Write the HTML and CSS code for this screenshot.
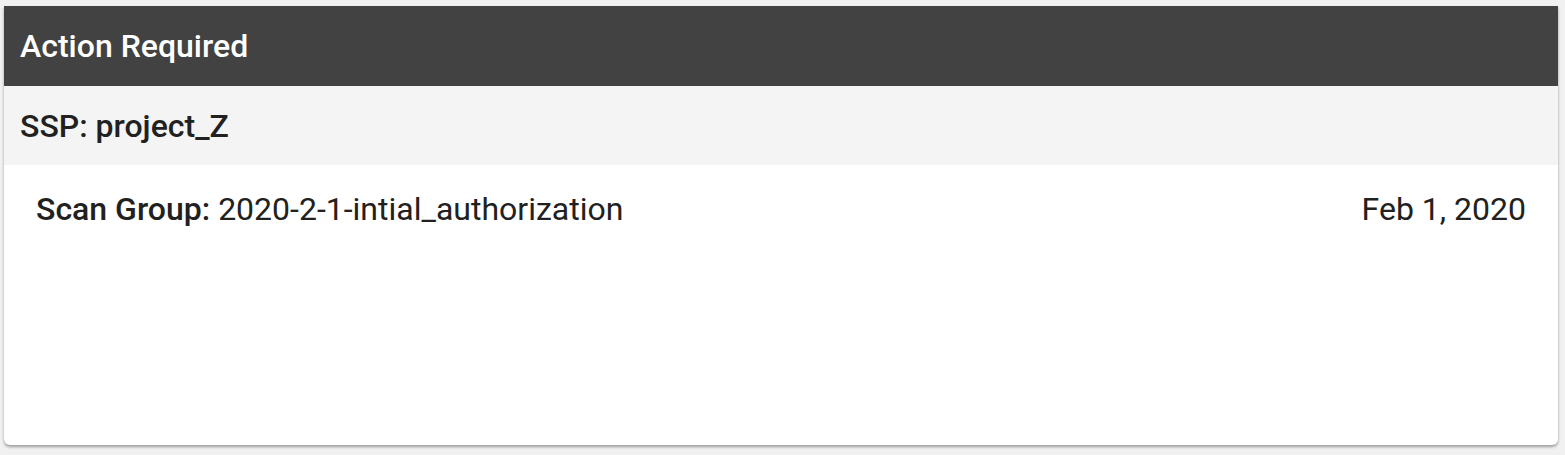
FILE: index.html
```html
<!DOCTYPE html>
<html>
<head>
<meta charset="utf-8">
<link rel="stylesheet" href="styles.css">
</head>
<body>
<div class="card">
  <div class="card-header">Action Required</div>
  <div class="group-header">SSP: project_Z</div>
  <div class="card-body">
    <div class="item">
      <div class="item-name"><span class="label">Scan Group:</span> 2020-2-1-intial_authorization</div>
      <div class="item-date">Feb 1, 2020</div>
    </div>
  </div>
</div>
</body>
</html>
```
FILE: styles.css
```css
html, body {
  margin: 0;
  padding: 0;
  background: #f1f1f1;
  font-family: Roboto, "Liberation Sans", sans-serif;
}
body {
  padding: 6px 7px 10px 4px;
}
.card {
  background: #ffffff;
  border-radius: 0 0 6px 6px;
  box-shadow: 0 2px 3px rgba(0,0,0,0.35);
  height: 439px;
  display: flex;
  flex-direction: column;
}
.card-header {
  background: #424242;
  color: #ffffff;
  height: 80px;
  box-sizing: border-box;
  display: flex;
  align-items: center;
  padding-left: 16px;
  font-size: 32px;
  font-weight: 500;
}
.group-header {
  background: #f4f4f4;
  color: #212121;
  height: 79px;
  box-sizing: border-box;
  display: flex;
  align-items: center;
  padding-left: 16px;
  font-size: 32px;
  font-weight: 500;
}
.card-body {
  padding: 24px 32px 0 32px;
}
.item {
  display: flex;
  justify-content: space-between;
  align-items: center;
  font-size: 32px;
  line-height: 40px;
  color: #212121;
}
.label {
  font-weight: 500;
}
```
